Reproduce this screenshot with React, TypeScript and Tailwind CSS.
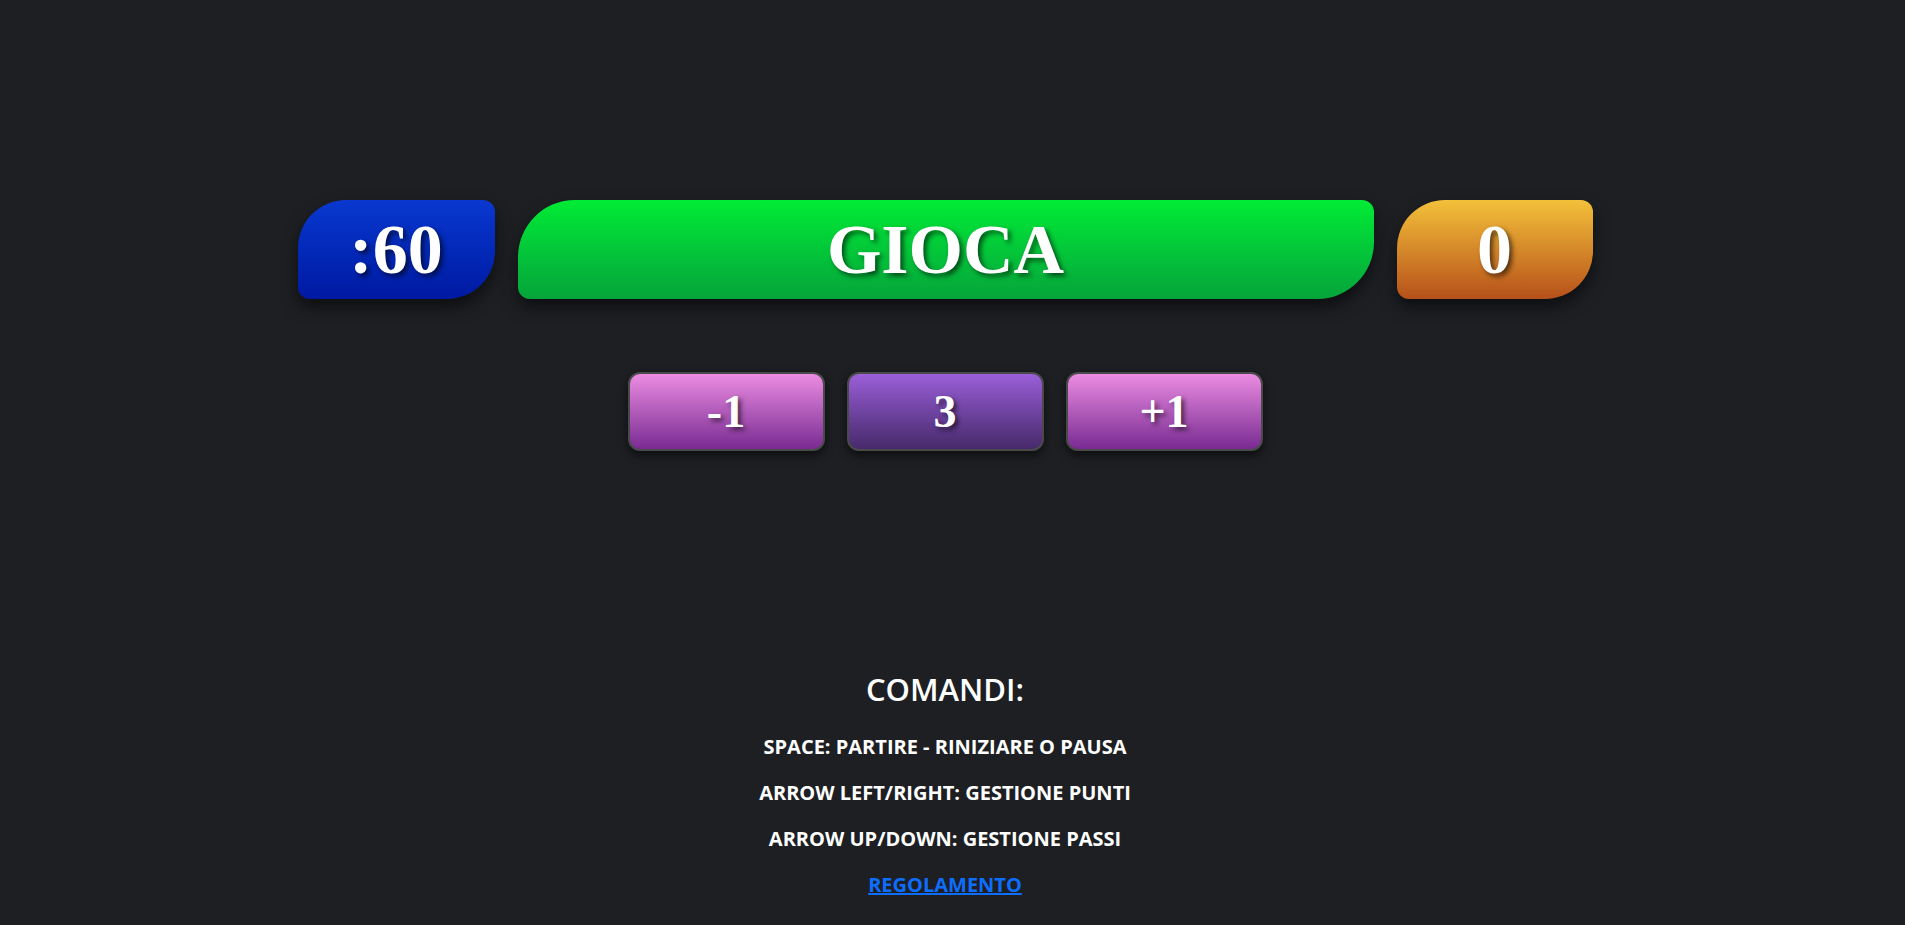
import React from "react";

const serif = "font-['Liberation_Serif','Times_New_Roman',serif] font-bold text-white [text-shadow:3px_3px_5px_rgba(0,0,0,0.6)]";

export default function App() {
  return (
    <div className="min-h-[925px] w-full bg-[#1d1f23] pr-[15px] font-['Open_Sans','Noto_Sans',sans-serif] text-white">
      <div className="flex flex-col items-center pt-[200px]">
        <div className="flex gap-[23px]">
          <div className={`flex h-[99px] w-[197px] items-center justify-center rounded-[48px_12px_48px_12px] bg-gradient-to-b from-[#0a38d0] to-[#0019a2] [box-shadow:0_8px_16px_rgba(0,0,0,0.55)] text-[70px] leading-none ${serif}`}>
            :60
          </div>
          <div className={`flex h-[99px] w-[856px] items-center justify-center rounded-[57px_12px_57px_12px] bg-gradient-to-b from-[#00ec34] to-[#05a43a] [box-shadow:0_8px_16px_rgba(0,0,0,0.55)] text-[70px] leading-none ${serif}`}>
            GIOCA
          </div>
          <div className={`flex h-[99px] w-[196px] items-center justify-center rounded-[48px_12px_48px_12px] bg-gradient-to-b from-[#f3c13a] to-[#b5501a] [box-shadow:0_8px_16px_rgba(0,0,0,0.55)] text-[70px] leading-none ${serif}`}>
            0
          </div>
        </div>

        <div className="mt-[73px] flex gap-[22px]">
          <div className={`flex h-[79px] w-[197px] items-center justify-center rounded-[12px] border-2 border-[#4a4a4a] bg-gradient-to-b from-[#ec8ce2] to-[#7a2a92] [box-shadow:0_4px_10px_rgba(0,0,0,0.6)] text-[46px] leading-none ${serif}`}>
            -1
          </div>
          <div className={`flex h-[79px] w-[197px] items-center justify-center rounded-[12px] border-2 border-[#4a4a4a] bg-gradient-to-b from-[#9b5fda] to-[#472a6b] [box-shadow:0_4px_10px_rgba(0,0,0,0.6)] text-[46px] leading-none ${serif}`}>
            3
          </div>
          <div className={`flex h-[79px] w-[197px] items-center justify-center rounded-[12px] border-2 border-[#4a4a4a] bg-gradient-to-b from-[#ec8ce2] to-[#7a2a92] [box-shadow:0_4px_10px_rgba(0,0,0,0.6)] text-[46px] leading-none ${serif}`}>
            +1
          </div>
        </div>

        <div className="mt-[218px] h-[40px] text-[31px] font-semibold leading-[40px]">COMANDI:</div>
        <div className="mt-[15px] flex flex-col items-center text-[20px] font-bold">
          <div className="h-[46px] leading-[46px]">SPACE: PARTIRE - RINIZIARE O PAUSA</div>
          <div className="h-[46px] leading-[46px]">ARROW LEFT/RIGHT: GESTIONE PUNTI</div>
          <div className="h-[46px] leading-[46px]">ARROW UP/DOWN: GESTIONE PASSI</div>
          <div className="h-[46px] leading-[46px]">
            <a href="#" className="text-[#0d6efd] underline">REGOLAMENTO</a>
          </div>
        </div>
      </div>
    </div>
  );
}
